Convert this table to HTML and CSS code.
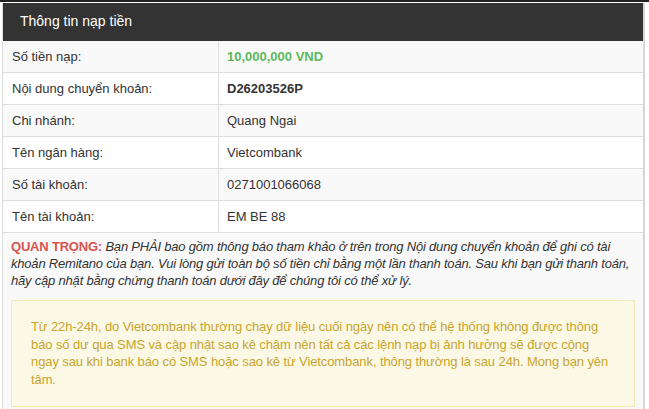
FILE: index.html
```html
<!DOCTYPE html>
<html lang="vi">
<head>
<meta charset="utf-8">
<link rel="stylesheet" href="styles.css">
</head>
<body>
<div class="topline"></div>
<div class="panel">
  <div class="panel-heading">Thông tin nạp tiền</div>
  <table class="info">
    <tr class="odd"><td class="lbl">Số tiền nạp:</td><td class="val amount">10,000,000 VND</td></tr>
    <tr><td class="lbl">Nội dung chuyển khoản:</td><td class="val strong">D26203526P</td></tr>
    <tr class="odd"><td class="lbl">Chi nhánh:</td><td class="val">Quang Ngai</td></tr>
    <tr><td class="lbl">Tên ngân hàng:</td><td class="val">Vietcombank</td></tr>
    <tr class="odd"><td class="lbl">Số tài khoản:</td><td class="val">0271001066068</td></tr>
    <tr><td class="lbl">Tên tài khoản:</td><td class="val">EM BE 88</td></tr>
  </table>
  <div class="notes">
    <p class="important"><span class="imp-label">QUAN TRỌNG:</span> <em>Bạn PHẢI bao gồm thông báo tham khảo ở trên trong Nội dung chuyển khoản để ghi có tài khoản Remitano của bạn. Vui lòng gửi toàn bộ số tiền chỉ bằng một lần thanh toán. Sau khi bạn gửi thanh toán, hãy cập nhật bằng chứng thanh toán dưới đây để chúng tôi có thể xử lý.</em></p>
    <div class="alert">Từ 22h-24h, do Vietcombank thường chạy dữ liệu cuối ngày nên có thể hệ thống không được thông báo số dư qua SMS và cập nhật sao kê chậm nên tất cả các lệnh nạp bị ảnh hưởng sẽ được cộng ngay sau khi bank báo có SMS hoặc sao kê từ Vietcombank, thông thường là sau 24h. Mong bạn yên tâm.</div>
  </div>
</div>
</body>
</html>
```
FILE: styles.css
```css
html, body {
  margin: 0;
  padding: 0;
  background: #ffffff;
  font-family: "Liberation Sans", Arial, sans-serif;
  font-size: 13px;
  color: #333333;
}
.topline {
  height: 2px;
  background: #222222;
}
.panel {
  margin: 1px 4px 0 2px;
  border: 1px solid #dddddd;
  border-right: 2px solid #d6d6d6;
  border-top: none;
}
.panel-heading {
  background: #333333;
  color: #ffffff;
  font-size: 14px;
  height: 38px;
  line-height: 37px;
  padding-left: 17px;
}
.info {
  width: 100%;
  border-collapse: collapse;
}
.info td {
  height: 31px;
  padding: 0 0 0 9px;
  border-bottom: 1px solid #dddddd;
  line-height: 17px;
  background: #ffffff;
}
.info tr.odd td {
  background: #f9f9f9;
}
.info td.lbl {
  width: 206px;
  border-right: 1px solid #dddddd;
}
.info td.val {
  padding-left: 8px;
}
.amount {
  color: #5cb85c;
  font-weight: bold;
}
.strong {
  font-weight: bold;
}
.notes {
  background: #f9f9f9;
  padding: 5px 8px 4px 8px;
}
.important {
  margin: 0 0 11px 0;
  line-height: 17px;
  letter-spacing: -0.2px;
}
.imp-label {
  color: #d9534f;
  font-weight: bold;
}
.important em {
  font-style: italic;
}
.alert {
  background: #fbf8e6;
  border: 1px solid #f5e9b8;
  color: #c9a52c;
  padding: 17px 21px 18px 19px;
  line-height: 17.5px;
  letter-spacing: -0.1px;
}
```
